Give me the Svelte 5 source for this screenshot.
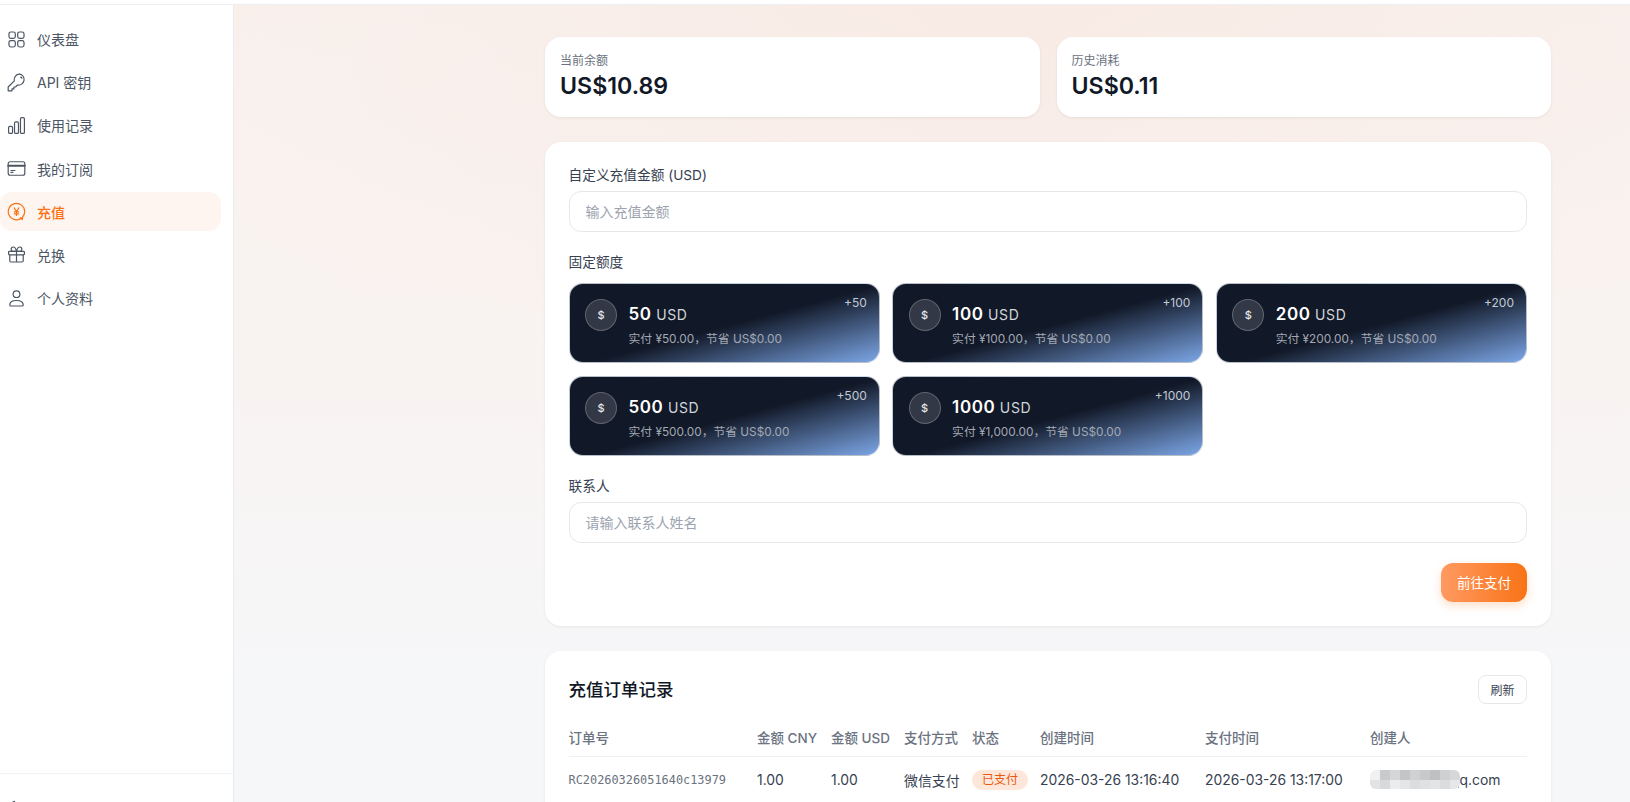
<script>
  const stats = [
    { label: '当前余额', value: 'US$10.89' },
    { label: '历史消耗', value: 'US$0.11' }
  ];

  const plans = [
    { amount: '50', paid: '¥50.00' },
    { amount: '100', paid: '¥100.00' },
    { amount: '200', paid: '¥200.00' },
    { amount: '500', paid: '¥500.00' },
    { amount: '1000', paid: '¥1,000.00' }
  ];

  const nav = [
    { label: '仪表盘', icon: 'grid' },
    { label: 'API 密钥', icon: 'key' },
    { label: '使用记录', icon: 'chart' },
    { label: '我的订阅', icon: 'card' },
    { label: '充值', icon: 'yen', active: true },
    { label: '兑换', icon: 'gift' },
    { label: '个人资料', icon: 'user' }
  ];

  // mosaic over the creator's e-mail
  const mosaic = [
    '#f1f1f2', '#c9cacc', '#d5d6d8', '#c4c5c7', '#d0d1d3', '#c8c9cb', '#bfc0c2', '#cfd0d2', '#d6d7d9',
    '#e2e3e4', '#d8d9db', '#ebeced', '#e4e5e6', '#dcdddf', '#e0e1e3', '#e3e4e5', '#dbdcde', '#e6e7e8'
  ];
</script>

<div class="topbar"></div>
<div class="layout">
  <aside class="sidebar">
    <nav class="nav">
      {#each nav as item}
        <div class="nav-item" class:active={item.active}>
          <svg class="nav-icon" viewBox="0 0 24 24" fill="none" stroke="currentColor" stroke-width="1.5" stroke-linecap="round" stroke-linejoin="round">
            {#if item.icon === 'grid'}
              <rect x="2.5" y="2.5" width="8" height="8" rx="2.4" />
              <rect x="13.5" y="2.5" width="8" height="8" rx="2.4" />
              <rect x="2.5" y="13.5" width="8" height="8" rx="2.4" />
              <rect x="13.5" y="13.5" width="8" height="8" rx="2.4" />
            {:else if item.icon === 'key'}
              <path d="M15.75 1.5a6.75 6.75 0 0 0-6.53 8.47L1.5 17.7v4.8h4.8v-2.4h2.4v-2.4h2.1l2.4-2.5a6.75 6.75 0 1 0 2.55-14.1Z" />
              <path d="M17.25 5.25a1.5 1.5 0 0 1 1.5 1.5" />
            {:else if item.icon === 'chart'}
              <rect x="2" y="13" width="5" height="9" rx="1.6" />
              <rect x="9.5" y="7.5" width="5" height="14.5" rx="1.6" />
              <rect x="17" y="2" width="5" height="20" rx="1.6" />
            {:else if item.icon === 'card'}
              <rect x="1.5" y="3.5" width="21" height="17" rx="2.5" />
              <path d="M1.5 8.5h21" stroke-width="2.4" />
              <path d="M5 14.5h5M5 17h2.5" />
            {:else if item.icon === 'yen'}
              <path d="M18.6 20.2A10.4 10.4 0 1 1 22.4 12c0 2.6-1 5-2.6 6.8" />
              <path d="M17 19.6l2.2 2.6.6-3.2" />
              <path d="M9 7.5l3 4.5 3-4.5M12 12v5M9.2 12.5h5.6M9.2 15h5.6" />
            {:else if item.icon === 'gift'}
              <rect x="2" y="8" width="20" height="4.5" rx="1" />
              <path d="M3.5 12.5V20a1.5 1.5 0 0 0 1.500 1.5h14a1.5 1.5 0 0 0 1.500-1.5v-7.5M12 8v13.5" />
              <path d="M12 8S10.8 2.5 8 2.5a2.75 2.75 0 0 0 0 5.5h4Zm0 0s1.2-5.5 4-5.5a2.75 2.75 0 0 1 0 5.5h-4Z" />
            {:else}
              <circle cx="12" cy="6.5" r="4.25" />
              <path d="M3.5 20.2C3.5 16.6 7.3 14.500 12 14.500s8.500 2.100 8.500 5.700c0 .9-.7 1.300-1.500 1.300H5c-.8 0-1.500-.4-1.500-1.300Z" />
            {/if}
          </svg>
          <span>{item.label}</span>
        </div>
      {/each}
    </nav>
    <div class="sidebar-foot">
      <div class="nav-item">
        <svg class="nav-icon" viewBox="0 0 24 24" fill="none" stroke="currentColor" stroke-width="1.5" stroke-linecap="round" stroke-linejoin="round">
          <path d="M21 14.500A9 9 0 0 1 9.500 3 9 9 0 1 0 21 14.500Z" />
        </svg>
        <span>深色模式</span>
      </div>
    </div>
  </aside>

  <main class="main">
    <section class="stats">
      {#each stats as s}
        <div class="stat-card">
          <div class="stat-label">{s.label}</div>
          <div class="stat-value">{s.value}</div>
        </div>
      {/each}
    </section>

    <section class="card form-card">
      <label class="field-label" for="amount">自定义充值金额 (USD)</label>
      <input id="amount" class="input" placeholder="输入充值金额" />

      <div class="field-label fixed-label">固定额度</div>
      <div class="plans">
        {#each plans as p}
          <div class="plan">
            <div class="coin">$</div>
            <div class="plan-body">
              <div class="plan-amount"><b>{p.amount}</b> USD</div>
              <div class="plan-sub">实付 {p.paid}，节省 US$0.00</div>
            </div>
            <div class="plan-bonus">+{p.amount}</div>
          </div>
        {/each}
      </div>

      <label class="field-label contact-label" for="contact">联系人</label>
      <input id="contact" class="input" placeholder="请输入联系人姓名" />

      <div class="actions">
        <button class="pay">前往支付</button>
      </div>
    </section>

    <section class="card orders">
      <div class="orders-head">
        <h2>充值订单记录</h2>
        <button class="refresh">刷新</button>
      </div>
      <table>
        <thead>
          <tr>
            <th>订单号</th>
            <th>金额 CNY</th>
            <th>金额 USD</th>
            <th>支付方式</th>
            <th>状态</th>
            <th>创建时间</th>
            <th>支付时间</th>
            <th>创建人</th>
          </tr>
        </thead>
        <tbody>
          <tr>
            <td class="mono">RC20260326051640c13979</td>
            <td>1.00</td>
            <td>1.00</td>
            <td>微信支付</td>
            <td><span class="badge">已支付</span></td>
            <td>2026-03-26 13:16:40</td>
            <td>2026-03-26 13:17:00</td>
            <td>
              <span class="email">
                <span class="mosaic">
                  {#each mosaic as c}
                    <i style:background={c}></i>
                  {/each}
                </span>
                <span>qq.com</span>
              </span>
            </td>
          </tr>
        </tbody>
      </table>
    </section>
  </main>
</div>

<style>
  :global(body) {
    margin: 0;
    height: 802px;
    overflow: hidden;
    font-family: Inter, "Noto Sans CJK SC", sans-serif;
    color: #111827;
  }

  .topbar {
    height: 4px;
    background: #fff;
    border-bottom: 1px solid #eceef2;
  }

  .layout {
    display: flex;
    height: 797px;
    overflow: hidden;
    background:
      radial-gradient(900px 420px at 62% 0, rgba(248, 230, 223, 0.55), rgba(248, 230, 223, 0) 100%),
      linear-gradient(180deg, #f9f1ed 0, #f8f4f3 55%, #f6f7f9 85%);
  }

  .sidebar {
    width: 233px;
    flex-shrink: 0;
    background: #fff;
    border-right: 1px solid #e9ebef;
    display: flex;
    flex-direction: column;
  }

  .nav {
    flex: 1;
    display: flex;
    flex-direction: column;
    gap: 4.2px;
    padding: 14.5px 12px 0 0;
  }

  .nav-item {
    height: 39px;
    display: flex;
    align-items: center;
    gap: 11.5px;
    padding-left: 6.5px;
    border-radius: 12px;
    font-size: 14px;
    color: #4b5563;
  }

  .nav-item.active {
    background: #fff5f0;
    color: #f97316;
    font-weight: 500;
  }

  .nav-icon {
    width: 19px;
    height: 19px;
    flex-shrink: 0;
  }

  .sidebar-foot {
    flex-shrink: 0;
    box-sizing: border-box;
    height: 29px;
    border-top: 1px solid #f1f2f4;
    padding: 15px 12px 0 0;
  }

  .main {
    flex: 1;
    min-width: 0;
    padding: 32px 79px 0 311px;
  }

  .stats {
    display: grid;
    grid-template-columns: 1fr 1fr;
    gap: 17px;
  }

  .stat-card,
  .card {
    background: #fff;
    border-radius: 16px;
    box-shadow: 0 1px 3px rgba(17, 24, 39, 0.07);
  }

  .stat-card {
    height: 80px;
    box-sizing: border-box;
    padding: 16px 15px 0;
  }

  .stat-label {
    font-size: 12px;
    line-height: 16px;
    color: #6b7280;
  }

  .stat-value {
    margin-top: 2px;
    font-size: 23.2px;
    line-height: 30px;
    font-weight: 600;
    color: #111827;
  }

  .card {
    margin-top: 25px;
    padding: 24px 24px 24px 23.5px;
  }

  .form-card {
    height: 484px;
    padding-top: 23px;
    box-sizing: border-box;
    display: flex;
    flex-direction: column;
  }

  .field-label {
    display: block;
    font-size: 13.7px;
    line-height: 20px;
    font-weight: 400;
    color: #374151;
  }

  .input {
    display: block;
    box-sizing: border-box;
    width: 100%;
    height: 41px;
    margin-top: 6px;
    padding: 0 16px;
    border: 1px solid #e5e7eb;
    border-radius: 12px;
    background: #fff;
    font: inherit;
    font-size: 14px;
    outline: none;
    flex-shrink: 0;
  }

  .input::placeholder {
    color: #9ca3af;
  }

  .fixed-label {
    margin-top: 20px;
  }

  .plans {
    display: grid;
    grid-template-columns: repeat(3, 1fr);
    gap: 13px 12.3px;
    margin-top: 11px;
  }

  .plan {
    position: relative;
    height: 80px;
    box-sizing: border-box;
    display: flex;
    gap: 11.500px;
    padding: 15px 16px 0 15.500px;
    border: 1px solid rgba(226, 232, 240, 0.8);
    border-radius: 14px;
    background: linear-gradient(165deg, #111827 0%, #111827 52%, #7ca6e6 100%);
    color: #fff;
  }

  .coin {
    width: 32px;
    height: 32px;
    box-sizing: border-box;
    flex-shrink: 0;
    display: flex;
    align-items: center;
    justify-content: center;
    border: 1px solid rgba(255, 255, 255, 0.22);
    border-radius: 50%;
    background: rgba(255, 255, 255, 0.14);
    font-size: 11px;
    font-weight: 500;
    color: #e5e7eb;
  }

  .plan-body {
    min-width: 0;
  }

  .plan-amount {
    font-size: 14px;
    line-height: 24px;
    letter-spacing: 0.6px;
    color: #d1d5db;
    margin-top: 3px;
  }

  .plan-amount b {
    font-size: 17px;
    font-weight: 600;
    color: #fff;
  }

  .plan-sub {
    margin-top: 4px;
    font-size: 11.8px;
    line-height: 16px;
    color: #a3a9b4;
  }

  .plan-bonus {
    position: absolute;
    top: 11px;
    right: 12px;
    font-size: 12px;
    line-height: 16px;
    color: #c3c9d3;
  }

  .contact-label {
    margin-top: 19.500px;
  }

  .actions {
    display: flex;
    justify-content: flex-end;
    margin-top: 20px;
  }

  .pay {
    width: 86px;
    height: 39px;
    border: none;
    border-radius: 12px;
    background: linear-gradient(90deg, #ff9a62, #f97316);
    box-shadow: 0 4px 10px rgba(249, 115, 22, 0.22);
    color: #fff;
    font: inherit;
    font-size: 13.5px;
    font-weight: 400;
  }

  .orders {
    height: 300px;
    box-sizing: border-box;
  }

  .orders-head {
    display: flex;
    align-items: center;
    justify-content: space-between;
  }

  .orders-head h2 {
    margin: 0;
    font-size: 17.500px;
    line-height: 28px;
    font-weight: 500;
    color: #111827;
  }

  .refresh {
    width: 49px;
    height: 29px;
    padding: 0;
    border: 1px solid #e5e7eb;
    border-radius: 8px;
    background: #fff;
    font: inherit;
    font-size: 12px;
    font-weight: 400;
    color: #374151;
  }

  table {
    width: 100%;
    margin-top: 14px;
    table-layout: fixed;
    border-collapse: collapse;
  }

  th {
    height: 38px;
    padding: 0;
    text-align: left;
    font-size: 13.500px;
    font-weight: 500;
    color: #6b7280;
    border-bottom: 1px solid #f0f1f4;
  }

  th:nth-child(1) { width: 188.500px; }
  th:nth-child(2) { width: 74px; }
  th:nth-child(3) { width: 73px; }
  th:nth-child(4) { width: 68px; }
  th:nth-child(5) { width: 68px; }
  th:nth-child(6) { width: 165px; }
  th:nth-child(7) { width: 165px; }

  td {
    height: 45px;
    padding: 0;
    font-size: 13.900px;
    color: #374151;
    white-space: nowrap;
  }

  td.mono {
    font-family: "DejaVu Sans Mono", monospace;
    font-size: 11.900px;
    color: #6b7280;
  }

  .badge {
    display: inline-block;
    padding: 0 10px;
    border-radius: 10px;
    background: #fde6da;
    color: #ea580c;
    font-size: 12px;
    line-height: 20px;
  }

  .email {
    display: flex;
    align-items: center;
  }

  .mosaic {
    position: relative;
    display: grid;
    grid-template-columns: repeat(9, 10px);
    grid-auto-rows: 9.500px;
    margin-right: -9px;
    border-radius: 6px;
    overflow: hidden;
  }

  .mosaic i {
    display: block;
  }
</style>
